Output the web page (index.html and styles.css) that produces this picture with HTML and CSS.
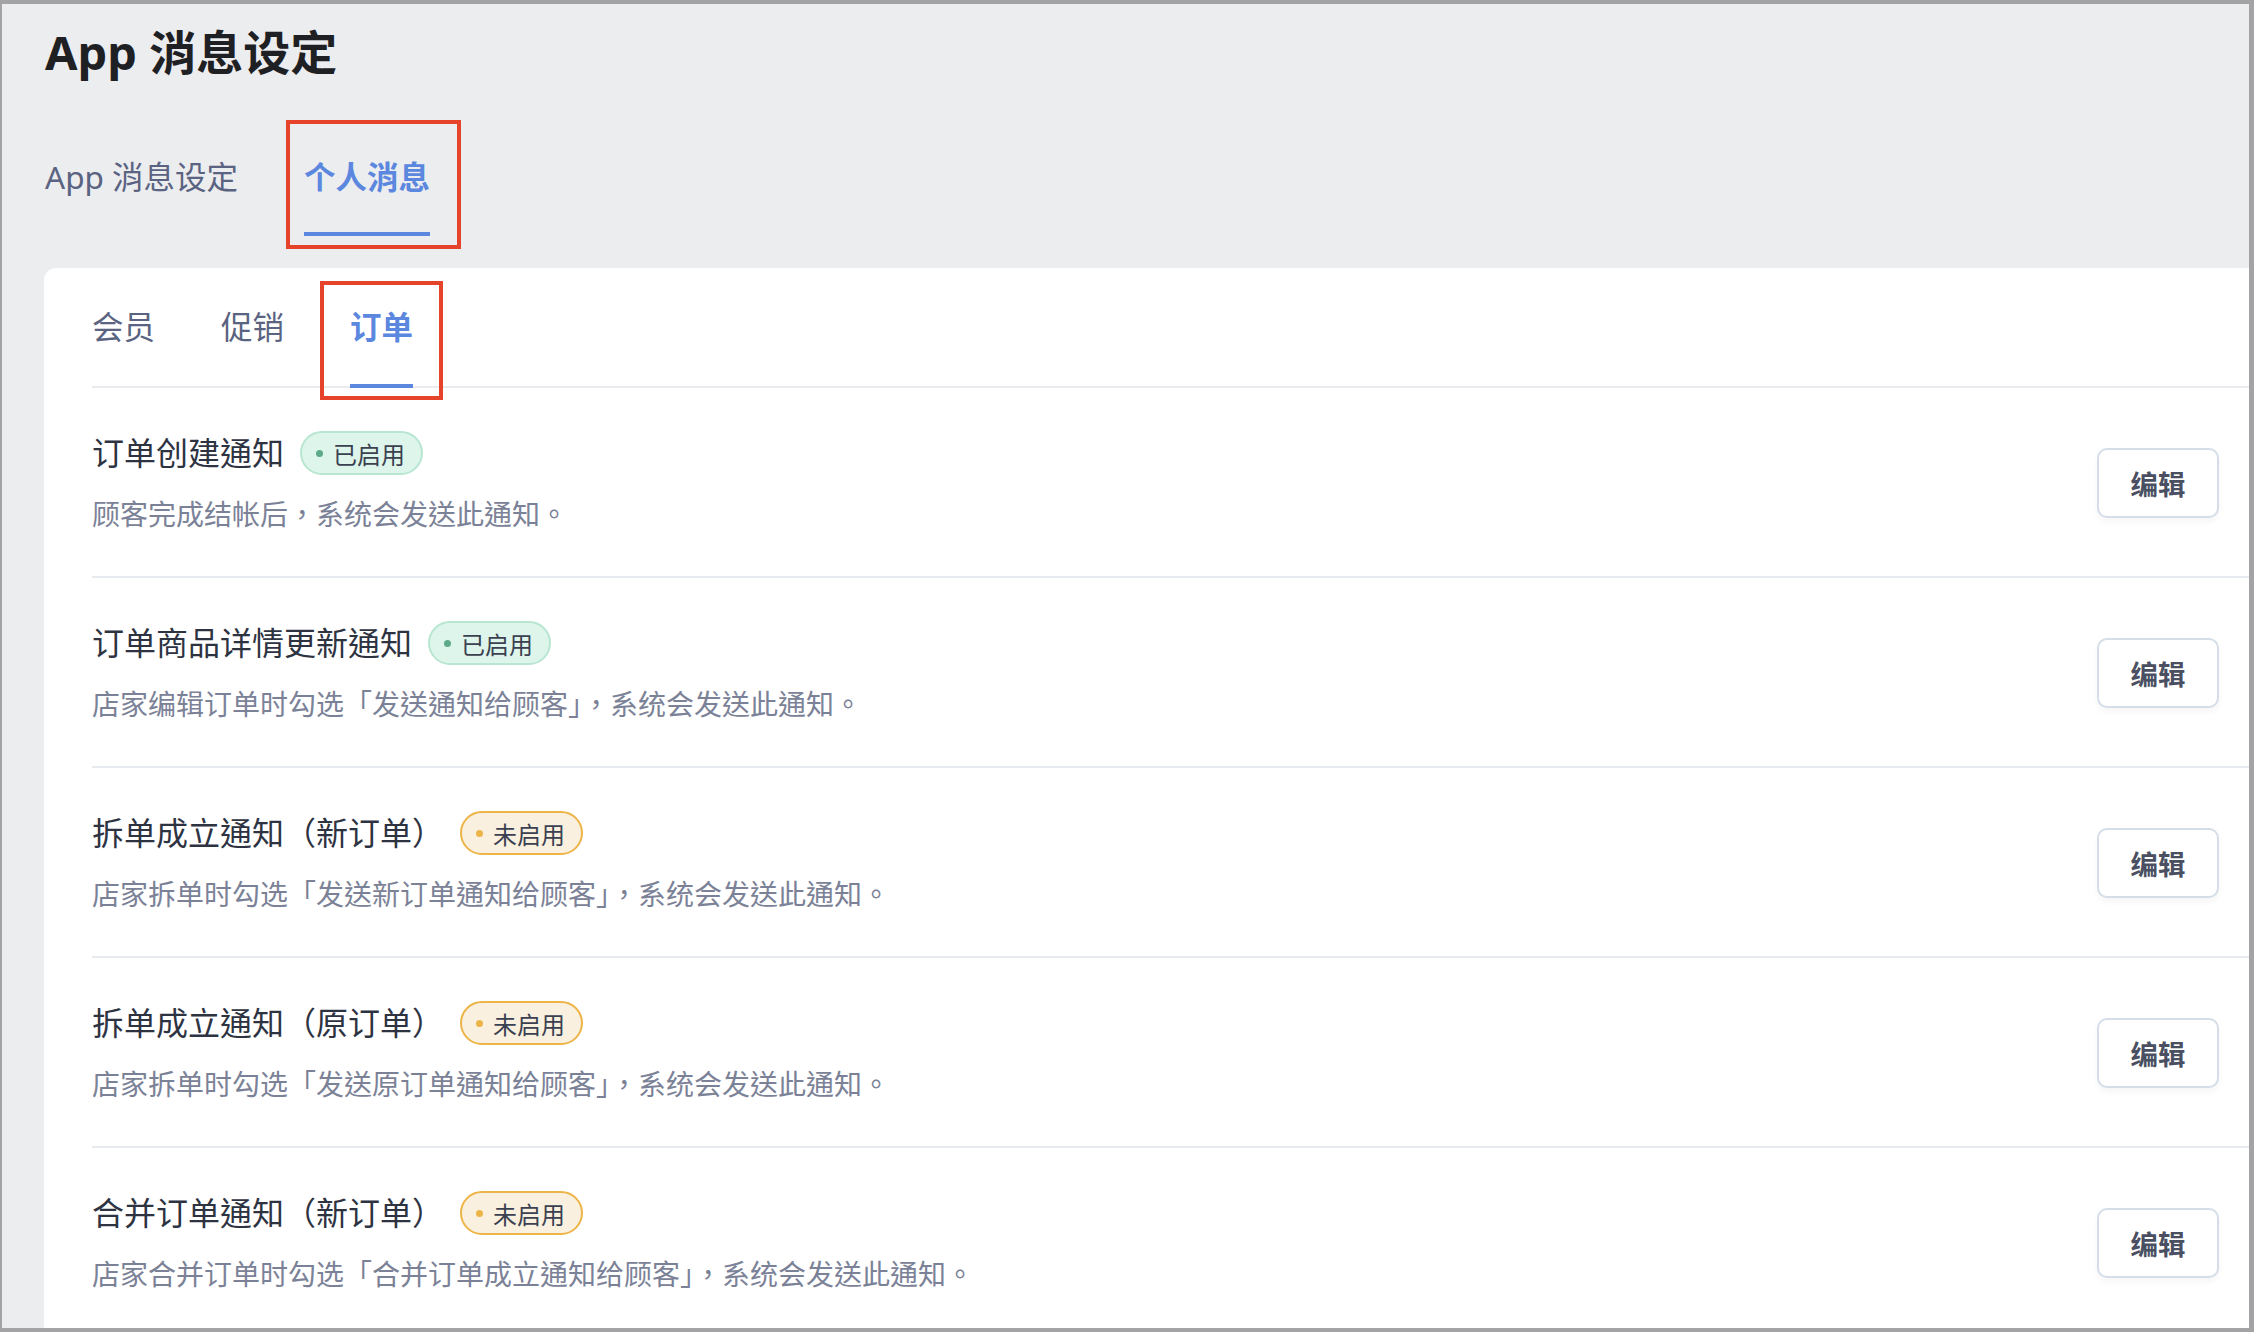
FILE: index.html
```html
<!DOCTYPE html>
<html lang="zh-TW">
<head>
    <meta charset="UTF-8">
    <meta name="viewport" content="width=device-width, initial-scale=1.0">
    <title>App 消息设定</title>
    <link rel="stylesheet" href="styles.css">
</head>
<body>
    <div class="window">
        <h1 class="page-title">App 消息设定</h1>

        <div class="tabs">
            <div class="tab">App 消息设定</div>
            <div class="tab active marked mark-top">个人消息</div>
        </div>

        <div class="card">
            <div class="subtabs">
                <div class="subtab">会员</div>
                <div class="subtab">促销</div>
                <div class="subtab active marked mark-sub">订单</div>
            </div>

            <ul class="notice-list">
                <li class="notice">
                    <div class="notice-info">
                        <div class="notice-head">
                            <span class="notice-name">订单创建通知</span>
                            <span class="badge on"><i class="dot"></i>已启用</span>
                        </div>
                        <p class="notice-desc">顾客完成结帐后，系统会发送此通知。</p>
                    </div>
                    <button class="edit-btn" type="button">编辑</button>
                </li>
                <li class="notice">
                    <div class="notice-info">
                        <div class="notice-head">
                            <span class="notice-name">订单商品详情更新通知</span>
                            <span class="badge on"><i class="dot"></i>已启用</span>
                        </div>
                        <p class="notice-desc">店家编辑订单时勾选「发送通知给顾客」，系统会发送此通知。</p>
                    </div>
                    <button class="edit-btn" type="button">编辑</button>
                </li>
                <li class="notice">
                    <div class="notice-info">
                        <div class="notice-head">
                            <span class="notice-name">拆单成立通知（新订单）</span>
                            <span class="badge off"><i class="dot"></i>未启用</span>
                        </div>
                        <p class="notice-desc">店家拆单时勾选「发送新订单通知给顾客」，系统会发送此通知。</p>
                    </div>
                    <button class="edit-btn" type="button">编辑</button>
                </li>
                <li class="notice">
                    <div class="notice-info">
                        <div class="notice-head">
                            <span class="notice-name">拆单成立通知（原订单）</span>
                            <span class="badge off"><i class="dot"></i>未启用</span>
                        </div>
                        <p class="notice-desc">店家拆单时勾选「发送原订单通知给顾客」，系统会发送此通知。</p>
                    </div>
                    <button class="edit-btn" type="button">编辑</button>
                </li>
                <li class="notice">
                    <div class="notice-info">
                        <div class="notice-head">
                            <span class="notice-name">合并订单通知（新订单）</span>
                            <span class="badge off"><i class="dot"></i>未启用</span>
                        </div>
                        <p class="notice-desc">店家合并订单时勾选「合并订单成立通知给顾客」，系统会发送此通知。</p>
                    </div>
                    <button class="edit-btn" type="button">编辑</button>
                </li>
            </ul>
        </div>
    </div>
</body>
</html>
```

FILE: styles.css
```css
html, body {
    margin: 0;
    height: 100%;
}
body {
    background-color: #a3a3a5;
    overflow: hidden;
    font-family: "Noto Sans", "Noto Sans CJK TC", sans-serif;
}
.window {
    margin: 4px 5px 4px 2px;
    height: 1324px;
    background-color: #ecedef;
    overflow: hidden;
}
.page-title {
    margin: 0;
    padding: 19px 0 0 43px;
    font-size: 47px;
    line-height: 58px;
    font-weight: 700;
    color: #1f2024;
}
.tabs {
    display: flex;
    gap: 66px;
    margin: 74px 0 0 43px;
}
.tab {
    position: relative;
    font-size: 31.5px;
    line-height: 44px;
    padding-bottom: 33px;
    border-bottom: 4px solid transparent;
    color: #5a6381;
}
.tab.active {
    color: #5b87df;
    font-weight: 700;
    border-bottom-color: #5b87df;
}

/* red annotation boxes */
.marked::after {
    content: "";
    position: absolute;
    border: 4px solid #e6432b;
}
.mark-top::after {
    top: -35px;
    bottom: -17px;
    left: -18px;
    right: -31px;
}
.mark-sub::after {
    top: -24px;
    bottom: -16px;
    left: -30px;
    right: -30px;
}

.card {
    margin: 32px -30px 0 42px;
    padding: 37px 0 0 48px;
    background-color: #ffffff;
    border-radius: 12px 0 0 0;
    height: 1100px;
}
.subtabs {
    display: flex;
    gap: 66px;
    border-bottom: 2px solid #e9ebee;
}
.subtab {
    position: relative;
    font-size: 31.5px;
    line-height: 44px;
    padding-bottom: 35px;
    border-bottom: 4px solid transparent;
    margin-bottom: -2px;
    color: #5a6381;
}
.subtab.active {
    color: #5b87df;
    font-weight: 700;
    border-bottom-color: #5b87df;
}

.notice-list {
    list-style-type: none;
    margin: 0;
    padding: 0;
}
.notice {
    display: flex;
    align-items: center;
    justify-content: space-between;
    padding: 43px 60px 42px 0;
    border-bottom: 2px solid #e7eaee;
}
.notice-head {
    display: flex;
    align-items: center;
    height: 44px;
}
.notice-name {
    font-size: 32px;
    line-height: 44px;
    color: #2e3342;
}
.badge {
    display: flex;
    align-items: center;
    gap: 10px;
    box-sizing: border-box;
    height: 44px;
    margin-left: 16px;
    padding: 0 16px 0 14px;
    border: 2px solid;
    border-radius: 22px;
    font-size: 24px;
    color: #3b4150;
}
.badge .dot {
    width: 7px;
    height: 7px;
    border-radius: 50%;
}
.badge.on {
    background-color: #ddf5eb;
    border-color: #b8e6d1;
}
.badge.on .dot {
    background-color: #5ea98a;
}
.badge.off {
    background-color: #f9f0e0;
    border-color: #edb447;
}
.badge.off .dot {
    background-color: #edb447;
}
.notice-desc {
    margin: 19px 0 0;
    font-size: 28px;
    line-height: 40px;
    color: #7b8297;
}
.edit-btn {
    width: 122px;
    height: 70px;
    border: 2px solid #d5dee8;
    border-radius: 10px;
    background-color: #ffffff;
    box-shadow: 0 4px 6px rgba(0, 0, 0, 0.04);
    font-family: "Noto Sans CJK TC", sans-serif;
    font-size: 27.5px;
    font-weight: 700;
    color: #4a5061;
    padding: 0;
}
```
